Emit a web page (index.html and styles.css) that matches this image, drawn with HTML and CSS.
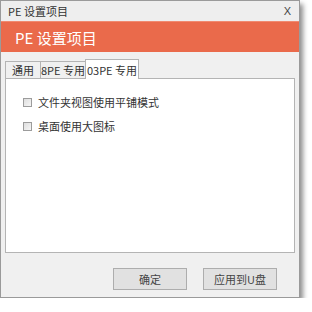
FILE: index.html
```html
<!DOCTYPE html>
<html>
<head>
<meta charset="utf-8">
<link rel="stylesheet" href="styles.css">
</head>
<body>
<div class="window">
  <div class="titlebar"><span class="title">PE 设置项目</span><span class="close">X</span></div>
  <div class="banner">PE 设置项目</div>
  <div class="content">
    <div class="tabs">
      <div class="tab t1">通用</div>
      <div class="tab t2">8PE 专用</div>
      <div class="tab t3 active">03PE 专用</div>
    </div>
    <div class="panel">
      <label class="opt"><span class="box"></span><span>文件夹视图使用平铺模式</span></label>
      <label class="opt"><span class="box"></span><span>桌面使用大图标</span></label>
    </div>
    <div class="buttons">
      <div class="btn">确定</div>
      <div class="btn">应用到U盘</div>
    </div>
  </div>
</div>
</body>
</html>
```
FILE: styles.css
```css
html, body { margin: 0; padding: 0; background: #ffffff; }
body { font-family: "Noto Sans CJK SC", "Liberation Sans", sans-serif; color: #333; }
.window {
  width: 298px; height: 296px;
  border: 1px solid #9a9a9a;
  background: #f0f0f0;
  box-shadow: 3px 4px 5px rgba(0,0,0,0.45);
  display: flex; flex-direction: column;
}
.titlebar {
  height: 20px; padding: 0 8px 0 7px;
  background: #eeeeee;
  display: flex; justify-content: space-between; align-items: center;
  font-size: 11px; color: #333;
}
.close { font-family: "Liberation Sans", sans-serif; font-size: 11px; color: #444; }
.banner {
  height: 31px; background: #ea6a4b; color: #fff;
  font-size: 15px; padding-left: 14px;
  display: flex; align-items: center;
  border-top: 1px solid #f08a70;
  box-sizing: border-box;
}
.content { padding: 7px 4px 0 4px; flex: 1; display: flex; flex-direction: column; }
.tabs { display: flex; align-items: flex-end; height: 19px; padding-left: 0; }
.tab {
  box-sizing: border-box;
  height: 17px; border: 1px solid #b4b4b4; border-bottom: none;
  background: #f0f0f0;
  font-size: 11px; color: #333;
  display: flex; align-items: center; justify-content: center;
  margin-right: -1px;
}
.t1 { width: 36px; }
.t2 { width: 46px; }
.t3 { width: 54px; }
.tab.active {
  height: 20px; background: #fff; margin-bottom: -1px;
  position: relative; z-index: 1; align-items: flex-start; padding-top: 2px;
}
.panel {
  height: 175px; box-sizing: border-box;
  border: 1px solid #b4b4b4; background: #fff;
  padding: 15px 0 0 17px;
  display: flex; flex-direction: column; gap: 8px;
}
.opt { display: flex; align-items: center; gap: 6px; font-size: 11px; color: #333; height: 16px; }
.box {
  width: 9px; height: 9px; box-sizing: border-box;
  border: 1px solid #9c9c9c;
  background: linear-gradient(135deg, #dedede, #f6f6f6);
}
.buttons { display: flex; justify-content: flex-end; gap: 16px; padding: 15px 18px 0 0; }
.btn {
  width: 74px; height: 22px; box-sizing: border-box;
  border: 1px solid #adadad; background: #e1e1e1;
  font-size: 11px; color: #444;
  display: flex; align-items: center; justify-content: center;
}
```
